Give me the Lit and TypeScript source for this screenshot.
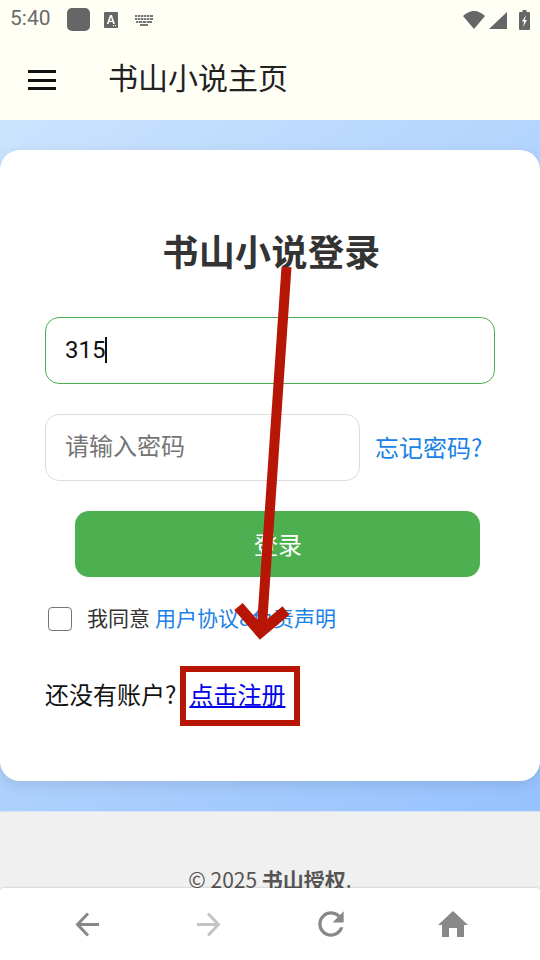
import { LitElement, html, css } from "lit";
import { customElement } from "lit/decorators.js";

@customElement("app-root")
export class AppRoot extends LitElement {
  static styles = css`
    :host {
      display: block;
      position: relative;
      width: 540px;
      height: 960px;
      overflow: hidden;
      font-family: Roboto, "Noto Sans CJK SC", sans-serif;
      background: #f0f0f0;
    }
    .page { display: flex; flex-direction: column; height: 960px; }
    .status {
      height: 40px; flex: none; background: #fffff5; display: flex; align-items: center;
      padding: 0 10px; box-sizing: border-box; color: #6a6a6a; font-size: 21px;
    }
    .time { width: 57px; position: relative; top: -2px; }
    .dot { width: 23px; height: 23px; border-radius: 5px; background: #666; margin-right: 14px; position: relative; top: -1px; }
    .status svg { display: block; flex: none; }
    .kbd { margin-left: 17px; }
    .right { margin-left: auto; display: flex; align-items: center; }
    .header {
      height: 80px; flex: none; background: #fffff5; display: flex; align-items: center;
      padding-left: 28px; box-sizing: border-box; gap: 52px;
    }
    .burger { width: 28px; display: flex; flex-direction: column; gap: 5.5px; }
    .burger i { display: block; height: 3px; background: #111; }
    .header h1 { margin: 0; font-size: 30px; font-weight: 400; color: #222; line-height: 40px; position: relative; top: -1px; }
    .main {
      flex: none; height: 691px; box-sizing: border-box; padding: 30px 0 0;
      background: linear-gradient(135deg, #cbe3fd 0%, #96c2fd 100%);
    }
    .card {
      height: 631px; box-sizing: border-box; background: #fff; border-radius: 20px;
      box-shadow: 0 4px 14px rgba(0,0,0,.1); padding: 80px 45px 0; display: flex; flex-direction: column;
    }
    h2 { margin: 0; height: 48px; line-height: 48px; font-size: 36px; letter-spacing: .4px; padding-left: 3px; font-weight: 700; color: #333; text-align: center; }
    .field {
      box-sizing: border-box; height: 67px; border-radius: 14px; background: #fff; display: flex; align-items: center;
      padding: 0 19px; font-size: 24px; color: #111;
    }
    .user { margin-top: 39px; border: 1px solid #4caf50; padding-bottom: 2px; }
    .caret { display: inline-block; width: 1.5px; height: 26px; background: #111; }
    .row { display: flex; align-items: center; margin-top: 30px; gap: 16px; }
    .pass { width: 315px; border: 1px solid #ddd; color: #757575; padding-bottom: 7px; }
    a.blue { color: #1a82e6; text-decoration: none; }
    .forgot { font-size: 24px; margin-left: -1px; position: relative; top: -1px; font-family: "Noto Sans CJK SC", sans-serif; }
    .login {
      margin: 30px 15px 0 30px; height: 66px; border-radius: 14px; background: #4caf50; color: #fff;
      display: flex; align-items: center; justify-content: center; font-size: 24px;
      padding: 0 0 2px 1px; box-sizing: border-box;
    }
    .agree { display: flex; align-items: center; margin: 27px 0 0 3px; font-size: 21px; color: #333; height: 26px; }
    .box { width: 24px; height: 24px; box-sizing: border-box; border: 1.5px solid #767676; border-radius: 4px; margin-right: 15px; position: relative; top: 2px; }
    .agree a { margin-left: 5px; }
    .reg { margin-top: 45px; font-size: 24px; color: #111; display: flex; align-items: center; height: 36px; font-family: "Noto Sans CJK SC", sans-serif; }
    .reg a { color: #0000ee; text-decoration: underline; margin-left: 13px; }
    .footer {
      flex: 1; background: #f0f0f0; border-top: 1px solid #d6e4f5; text-align: center; font-size: 21px; color: #555;
      padding-top: 52px; box-sizing: border-box; font-family: "Noto Sans CJK SC", sans-serif; font-weight: 400;
    }
    .footer b { font-weight: 700; }
    .nav {
      position: absolute; left: 0; right: 0; bottom: 0; height: 72px; background: #fff; border-radius: 4px 4px 0 0;
      box-shadow: 0 -1px 2px rgba(0,0,0,.1); display: flex; padding: 0 26.5px; box-sizing: border-box;
    }
    .nav span { flex: 1; display: flex; align-items: center; justify-content: center; }
    .nav span svg { display: block; }
    .overlay { position: absolute; left: 0; top: 0; pointer-events: none; }
  `;

  render() {
    return html`
      <div class="page">
        <div class="status">
          <span class="time">5:40</span>
          <span class="dot"></span>
          <svg width="14" height="16" viewBox="0 0 14 16"><path fill="#666" fill-rule="evenodd" d="M1 0h12a1 1 0 0 1 1 1v14a1 1 0 0 1-1 1H1a1 1 0 0 1-1-1V1a1 1 0 0 1 1-1zM6 3 2.800 12h1.800l.6-1.900h3.400l.5 1.900h1.900L7.900 3zm1 1.900 1.100 3.800H5.800zM9 13h1v1.200H9zM11 13h1v1.200h-1z"/></svg>
          <svg class="kbd" width="18" height="11" viewBox="0 0 18 11"><path fill="#777" d="M0 0h18v2H0zM0 3h18v2H0zM1 6h16v2H1zM5 9h8v2H5z"/><path fill="#fff" opacity=".6" d="M2 0h1v5H2zM5 0h1v5H5zM8 0h1v5H8zM11 0h1v5h-1zM14 0h1v5h-1zM3 6h1v2H3zM7 6h1v2H7zM11 6h1v2h-1z"/></svg>
          <span class="right">
            <svg width="22" height="18" viewBox="0 0 22 18"><path fill="#666" d="M11 18 0 5C3 2 7 0 11 0s8 2 11 5z"/></svg>
            <svg width="18" height="17" viewBox="0 0 18 17" style="margin-left:4px"><path fill="#666" d="M18 0v17H0z"/></svg>
            <svg width="11" height="20" viewBox="0 0 11 20" style="margin-left:12px"><path fill="#666" d="M3.500 0h4v2H10a1 1 0 0 1 1 1v16a1 1 0 0 1-1 1H1a1 1 0 0 1-1-1V3a1 1 0 0 1 1-1h2.500z"/><path fill="#fffff5" d="M7 5 3 11.500h2.200L4 17l4-7H5.700z"/></svg>
          </span>
        </div>
        <div class="header">
          <div class="burger"><i></i><i></i><i></i></div>
          <h1>书山小说主页</h1>
        </div>
        <div class="main">
          <div class="card">
            <h2>书山小说登录</h2>
            <div class="field user">315<span class="caret"></span></div>
            <div class="row">
              <div class="field pass">请输入密码</div>
              <a class="blue forgot">忘记密码?</a>
            </div>
            <div class="login">登录</div>
            <div class="agree">
              <span class="box"></span>我同意<a class="blue">用户协议&amp;免责声明</a>
            </div>
            <div class="reg">还没有账户?<a>点击注册</a></div>
          </div>
        </div>
        <div class="footer">© 2025 <b>书山授权</b>.</div>
      </div>
      <div class="nav">
        <span><svg width="24" height="25" viewBox="0 0 24 25"><path fill="none" stroke="#888" stroke-width="3" d="M24 12.500H3M13 1.500 2.500 12.500 13 23.500"/></svg></span>
        <span><svg width="24" height="25" viewBox="0 0 24 25"><path fill="none" stroke="#c4c4c4" stroke-width="3" d="M0 12.500h21M11 1.500l10.500 11L11 23.500"/></svg></span>
        <span><svg width="38" height="38" viewBox="0 0 24 24"><path fill="#888" d="M17.650 6.350A7.958 7.958 0 0 0 12 4a8 8 0 1 0 7.730 10h-2.080A6 6 0 1 1 12 6c1.660 0 3.140.69 4.220 1.780L13 11h7V4z"/></svg></span>
        <span><svg width="30" height="26" viewBox="0 0 30 26"><path fill="#888" d="M15 0 30 14h-4v12h-7v-9h-8v9H4V14H0z"/></svg></span>
      </div>
      <svg class="overlay" width="540" height="960" viewBox="0 0 540 960">
        <g fill="none" stroke="#b71606">
          <path stroke-width="10" d="M286.500 267 262 625"/>
          <path stroke-width="11" stroke-miterlimit="8" d="M238.500 606.500 260.500 632 286 610.500"/>
          <rect x="183" y="669" width="114" height="54" stroke-width="6"/>
        </g>
      </svg>
    `;
  }
}
